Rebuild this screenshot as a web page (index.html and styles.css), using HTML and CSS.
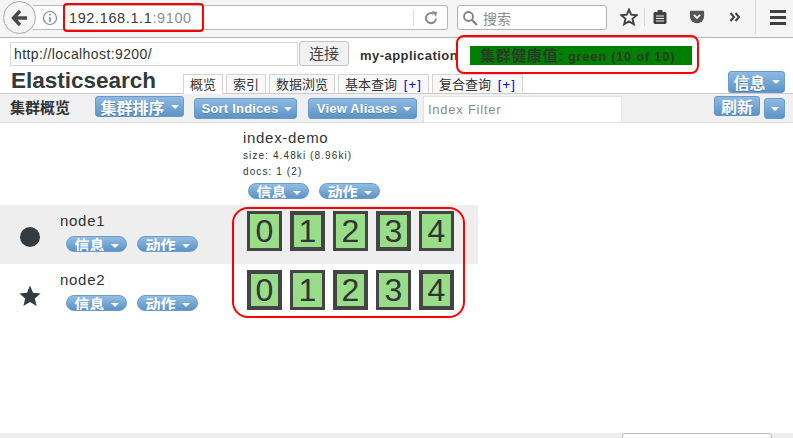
FILE: index.html
```html
<!DOCTYPE html>
<html lang="zh">
<head>
<meta charset="utf-8">
<title>Elasticsearch head</title>
<link rel="stylesheet" href="styles.css">
</head>
<body>
<div class="browser">
  <div class="back"><svg width="20" height="20" viewBox="0 0 20 20"><path d="M10 3 L3.5 10 L10 17 M4 10 H17" fill="none" stroke="#4a4a4a" stroke-width="3.4"/></svg></div>
  <div class="urlbar">
    <svg class="info" width="16" height="16" viewBox="0 0 16 16"><circle cx="8" cy="8" r="6.5" fill="none" stroke="#8a8a8a" stroke-width="1.2"/><path d="M8 7 V12 M8 4 V5.6" stroke="#8a8a8a" stroke-width="1.6"/></svg>
    <span class="url">192.168.1.1<span class="port">:9100</span></span>
    <span class="sep"></span>
    <svg class="reload" width="16" height="16" viewBox="0 0 16 16"><path d="M13 8.5 A5 5 0 1 1 10.5 3.8" fill="none" stroke="#8a8a8a" stroke-width="2"/><path d="M9 1 L14 2 L13 7 Z" fill="#8a8a8a"/></svg>
  </div>
  <div class="search">
    <svg width="16" height="16" viewBox="0 0 16 16"><circle cx="6.5" cy="6.5" r="4.5" fill="none" stroke="#808080" stroke-width="1.8"/><path d="M10 10 L15 15" stroke="#808080" stroke-width="2.2"/></svg>
    <span>搜索</span>
  </div>
  <div class="tools">
    <svg class="t-star" width="18" height="18" viewBox="0 0 18 18"><path d="M9 1.6 L11.2 6.7 L16.7 7.2 L12.5 10.8 L13.8 16.2 L9 13.4 L4.2 16.2 L5.5 10.8 L1.3 7.2 L6.8 6.7 Z" fill="none" stroke="#404040" stroke-width="1.9"/></svg>
    <span class="t-sep"></span>
    <svg class="t-clip" width="16" height="16" viewBox="0 0 16 16"><rect x="1.5" y="3" width="13" height="12" rx="1.5" fill="#404040"/><rect x="5.5" y="1" width="5" height="3.5" fill="#404040"/><path d="M4 7 H12 M4 9.5 H12 M4 12 H12" stroke="#f5f5f5" stroke-width="1"/></svg>
    <svg class="t-pocket" width="16" height="16" viewBox="0 0 18 16"><path d="M1 2 Q1 1 2 1 H16 Q17 1 17 2 V7 A8 8 0 0 1 1 7 Z" fill="#555"/><path d="M5.5 5.5 L9 9 L12.5 5.5" fill="none" stroke="#f5f5f5" stroke-width="2"/></svg>
    <svg class="t-more" width="12" height="12" viewBox="0 0 12 12"><path d="M1.5 2 L5 6 L1.5 10 M6.5 2 L10 6 L6.5 10" fill="none" stroke="#404040" stroke-width="2"/></svg>
    <span class="t-sep t-sep2"></span>
    <div class="burger"><i></i><i></i><i></i></div>
  </div>
</div>

<div class="conn">
  <div class="conn-input">http://localhost:9200/</div>
  <div class="conn-btn">连接</div>
  <div class="cluster">my-application</div>
  <div class="health"><span class="health-zh">集群健康值:</span> green (10 of 10)</div>
</div>

<div class="head">
  <div class="logo">Elasticsearch</div>
  <div class="tabs">
    <div class="tab tab-on">概览</div>
    <div class="tab">索引</div>
    <div class="tab">数据浏览</div>
    <div class="tab">基本查询 <b>[+]</b></div>
    <div class="tab">复合查询 <b>[+]</b></div>
  </div>
  <div class="btn btn-info">信息<i class="caret"></i></div>
</div>

<div class="bar">
  <div class="bar-title">集群概览</div>
  <div class="btn btn-sort">集群排序<i class="caret"></i></div>
  <div class="btn btn-en btn-si">Sort Indices<i class="caret"></i></div>
  <div class="btn btn-en btn-va">View Aliases<i class="caret"></i></div>
  <div class="filter">Index Filter</div>
  <div class="btn btn-refresh">刷新</div>
  <div class="btn btn-drop"><i class="caret"></i></div>
</div>

<div class="cluster-table">
  <div class="index-head">
    <div class="index-name">index-demo</div>
    <div class="index-meta">size: 4.48ki (8.96ki)</div>
    <div class="index-meta">docs: 1 (2)</div>
    <div class="pills pills-index">
      <div class="pill">信息<i class="caret"></i></div>
      <div class="pill">动作<i class="caret"></i></div>
    </div>
  </div>
  <div class="node node-a">
    <div class="node-icon"><svg width="20" height="20" viewBox="0 0 20 20"><circle cx="10" cy="10" r="10" fill="#343a3d"/></svg></div>
    <div class="node-info">
      <div class="node-name">node1</div>
      <div class="pills">
        <div class="pill">信息<i class="caret"></i></div>
        <div class="pill">动作<i class="caret"></i></div>
      </div>
    </div>
    <div class="shards">
      <div class="shard">0</div><div class="shard primary">1</div><div class="shard">2</div><div class="shard primary">3</div><div class="shard">4</div>
    </div>
  </div>
  <div class="node">
    <div class="node-icon"><svg width="22" height="22" viewBox="0 0 22 22"><path d="M11 .5 L14 7.8 L21.6 8.4 L15.8 13.4 L17.6 21 L11 16.9 L4.4 21 L6.2 13.4 L.4 8.4 L8 7.8 Z" fill="#343a3d"/></svg></div>
    <div class="node-info">
      <div class="node-name">node2</div>
      <div class="pills">
        <div class="pill">信息<i class="caret"></i></div>
        <div class="pill">动作<i class="caret"></i></div>
      </div>
    </div>
    <div class="shards">
      <div class="shard primary">0</div><div class="shard">1</div><div class="shard primary">2</div><div class="shard">3</div><div class="shard primary">4</div>
    </div>
  </div>
</div>

<div class="footer"><div class="footer-box"></div></div>

<div class="mark mark-url"></div>
<div class="mark mark-health"></div>
<div class="mark mark-shards"></div>
</body>
</html>
```
FILE: styles.css
```css
* { box-sizing: border-box; }
html, body { margin: 0; padding: 0; }
body {
  width: 793px; height: 438px; overflow: hidden; position: relative;
  background: #fff; color: #2f3437;
  font-family: "Liberation Sans", "Noto Sans CJK SC", sans-serif;
  display: flex; flex-direction: column;
}
/* browser chrome */
.browser {
  height: 38px; flex: none; background: #f5f5f5; border-bottom: 1px solid #b5b5b5;
  display: flex; align-items: flex-start; padding: 1px 0 0 3px;
}
.back {
  width: 33px; height: 33px; border-radius: 50%; border: 1px solid #a8a8a8;
  background: #f5f5f5; display: flex; align-items: center; justify-content: center;
  position: relative; z-index: 1; flex: none;
}
.urlbar {
  width: 415px; height: 25px; margin: 4px 0 0 -3px; background: #fff;
  border: 1px solid #b8b8b8; border-left: 0; border-radius: 0 3px 3px 0;
  display: flex; align-items: center; padding-left: 9px;
}
.url { font-size: 14.5px; color: #3a3a3a; margin-left: 11px; letter-spacing: .62px; }
.port { color: #8f8f8f; }
.sep { width: 1px; height: 16px; background: #d8d8d8; margin-left: auto; }
.reload { margin: 0 8px 0 9px; }
.search {
  width: 150px; height: 25px; margin: 4px 0 0 9px; background: #fff;
  border: 1px solid #b0b0b0; border-radius: 3px;
  display: flex; align-items: center; gap: 5px; padding-left: 4px;
  color: #8a8a8a; font-size: 14px;
}
.tools { display: flex; align-items: center; height: 32px; margin-left: 13px; }
.t-star { flex: none; }
.t-sep { width: 1px; height: 18px; background: #d6d6d6; margin: 0 6px 0 6px; }
.t-clip { margin-right: 21px; margin-left: 1px; }
.t-more { margin-left: 24px; }
.t-sep2 { height: 34px; margin: 0 0 0 14px; }
.burger { margin-left: 14px; width: 16px; display: flex; flex-direction: column; gap: 3px; }
.burger i { display: block; height: 3px; background: #404040; }

/* connection row */
.conn { height: 32px; flex: none; display: flex; align-items: flex-start; padding: 4px 0 0 10px; background: #fff; }
.conn-input {
  width: 288px; height: 24px; border: 1px solid #d8d8d8; background: #fff;
  font-size: 14px; line-height: 22px; padding-left: 3px; letter-spacing: .4px; color: #333;
}
.conn-btn {
  width: 50px; height: 25px; margin: -1px 0 0 1px; border: 1px solid #c4c4c4; border-radius: 3px;
  background: #f2f2f2; font-size: 15px; line-height: 23px; text-align: center; color: #444;
}
.cluster { font-size: 13px; font-weight: bold; margin: 6px 0 0 11px; letter-spacing: .45px; color: #333; width: 99px; white-space: nowrap; }
.health {
  width: 222px; height: 19px; margin: 4px 0 0 11px; background: #008000; color: #2a3a2a;
  font-size: 13px; font-weight: bold; line-height: 19px; padding-left: 10px; white-space: nowrap; letter-spacing: .7px;
}
.health-zh { font-size: 15px; letter-spacing: .6px; }

/* title + tabs */
.head { height: 23px; flex: none; display: flex; align-items: flex-start; position: relative; padding-left: 11px; }
.logo { font-size: 22.5px; font-weight: bold; line-height: 23px; width: 172px; margin-top: -1px; color: #33393c; white-space: nowrap; }
.tabs { display: flex; gap: 3px; margin-top: 4px; }
.tab {
  height: 19px; border: 1px solid #d5d5d5; border-bottom: 0; padding: 0 6px;
  font-size: 13px; line-height: 20px; color: #333; white-space: nowrap; background: #f8f8f8;
}
.tab-on { background: #fff; height: 20px; position: relative; z-index: 1; }
.tab b { color: #0000e0; font-weight: normal; margin-left: 3px; letter-spacing: 1.2px; }

/* buttons */
.btn {
  display: flex; align-items: center; justify-content: center; gap: 6px;
  color: #fff; font-weight: bold; font-size: 16px; white-space: nowrap;
  background: linear-gradient(#8fbae2, #5b94c6); border: 1px solid #6b9ac8; border-radius: 3px;
  text-shadow: 0 1px 0 #4d7fa8;
}
.caret { width: 0; height: 0; border: 4px solid transparent; border-top-color: #fff; border-bottom: 0; flex: none; }
.btn-info { width: 57px; height: 22px; margin: 1px 8px 0 auto; }
.bar {
  height: 30px; flex: none; background: #f0f0f0; border-top: 1px solid #ccc; border-bottom: 1px solid #ddd;
  display: flex; align-items: flex-start; padding-left: 10px;
}
.bar-title { font-size: 15px; line-height: 20px; font-weight: bold; width: 85px; margin-top: 4px; color: #333; white-space: nowrap; }
.btn-sort { width: 89px; height: 21px; margin-top: 2px; }
.btn-en { height: 21px; margin-top: 4px; font-size: 13px; letter-spacing: .2px; padding-left: 3px; }
.btn-si { width: 103px; margin-left: 10px; }
.btn-va { width: 109px; margin-left: 11px; }
.filter {
  width: 199px; height: 27px; margin: 2px 0 0 6px; background: #fff; border: 1px solid #e2e2e2;
  font-size: 13px; line-height: 25px; padding-left: 4px; color: #8a8a8a; letter-spacing: .75px;
}
.btn-refresh { width: 46px; height: 20px; margin: 2px 0 0 92px; }
.btn-drop { width: 21px; height: 21px; margin: 4px 0 0 4px; }

/* cluster */
.cluster-table { flex: 1; display: flex; flex-direction: column; }
.index-head { height: 82px; flex: none; padding: 4px 0 0 243px; }
.index-name { font-size: 15px; line-height: 21px; letter-spacing: .7px; }
.index-meta { font-size: 10px; line-height: 16px; letter-spacing: 1.1px; }
.pills { display: flex; gap: 10px; }
.pills-index { margin: 3px 0 0 5px; }
.pill {
  width: 61px; height: 16px; overflow: hidden; border: 1px solid #7299c9; border-radius: 8px;
  background: linear-gradient(#92bde4, #5b93c5); color: #fff; font-size: 15px; font-weight: bold;
  display: flex; align-items: flex-start; justify-content: center; gap: 6px; line-height: 18px;
}
.pill .caret { margin-top: 7px; }
.node { width: 478px; height: 59px; flex: none; display: flex; align-items: flex-start; }
.node-a { background: #eee; }
.node-icon { width: 60px; height: 59px; display: flex; align-items: center; justify-content: center; padding-top: 4px; flex: none; }
.node-info { width: 187px; padding-top: 7px; }
.node-name { font-size: 15px; line-height: 18px; letter-spacing: .7px; margin-bottom: 6px; }
.node-info .pills { margin-left: 6px; }
.shards { display: flex; gap: 8px; padding-top: 6px; }
.shard {
  width: 35px; height: 40px; background: #99dd88; border: 3px solid #444;
  font-size: 32px; line-height: 34px; text-align: center; color: #2f3437;
}
.shard.primary { border-width: 4px; line-height: 32px; }

.footer { height: 5px; flex: none; background: #eee; padding-left: 622px; overflow: hidden; }
.footer-box { width: 150px; height: 12px; background: #fff; border: 1px solid #bbb; border-radius: 3px; }

/* red annotations */
.mark { position: absolute; border: 2px solid #f00; }
.mark-url { left: 63px; top: 3px; width: 141px; height: 29px; border-radius: 4px; }
.mark-health { left: 456px; top: 35px; width: 243px; height: 39px; border-radius: 8px; }
.mark-shards { left: 232px; top: 207px; width: 233px; height: 111px; border-radius: 16px; }
```
